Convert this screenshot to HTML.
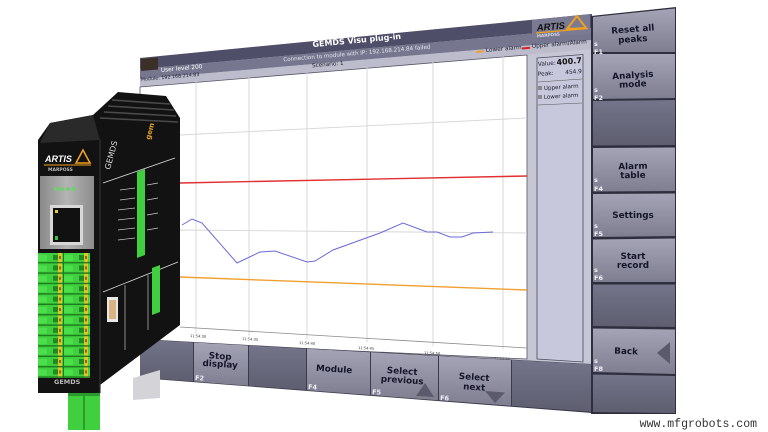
<!DOCTYPE html>
<html><head><meta charset="utf-8"><style>
html,body{margin:0;padding:0;background:#fff;}
svg{display:block;font-family:"DejaVu Sans","Liberation Sans",sans-serif;}
.bl{font-weight:bold;fill:#15152a;font-size:8.8px;text-anchor:middle;}
.fk{font-weight:bold;fill:#f0f0f8;font-size:6.5px;}
</style></head><body>
<svg width="768" height="432" viewBox="0 0 768 432" xmlns="http://www.w3.org/2000/svg">
<defs>
<linearGradient id="btn" x1="0" y1="0" x2="0" y2="1"><stop offset="0" stop-color="#a4a4b6"/><stop offset="1" stop-color="#7e7e90"/></linearGradient>
<linearGradient id="dk" x1="0" y1="0" x2="0" y2="1"><stop offset="0" stop-color="#74748a"/><stop offset="1" stop-color="#5e5e70"/></linearGradient>
<linearGradient id="gmod" x1="0" y1="0" x2="1" y2="0"><stop offset="0" stop-color="#8a8a8a"/><stop offset="0.5" stop-color="#b4b4b4"/><stop offset="1" stop-color="#8c8c8c"/></linearGradient>
<pattern id="term" x="0" y="253" width="26" height="10.4" patternUnits="userSpaceOnUse">
<rect width="26" height="10.4" fill="#3fcf3f"/>
<rect x="1" y="2" width="5" height="5" fill="#1f8a1f"/>
<rect x="6" y="0" width="4" height="10.4" fill="#e0c428"/>
<rect x="7" y="3" width="2" height="3" fill="#8a6a10"/>
<rect x="11" y="2" width="10" height="6" fill="#4be04b"/>
<rect x="0" y="9" width="26" height="1.4" fill="#1d7a1d"/>
</pattern>
</defs>

<polygon points="140,58 592,14 592,364 140,339" fill="#c6c6d4"/>
<polygon points="140,58 592,14 592,28 140,69" fill="#4e4e68"/>
<polygon points="140,69 592,28 592,40 140,79" fill="#76768e"/>
<polygon points="140,79 592,40 592,49 140,88" fill="#bcbccc"/>
<polygon points="532,20 590,14 590,34 532,38" fill="#7a7a92"/>
<text x="537" y="31" font-family="Liberation Sans,sans-serif" font-weight="bold" font-style="italic" font-size="9.5" fill="#111" transform="rotate(-5 537 31)">ARTIS</text>
<polygon points="567,29 577,16 586,28" fill="none" stroke="#f0a020" stroke-width="2"/>
<line x1="536" y1="33" x2="588" y2="28.5" stroke="#f0a020" stroke-width="1.3"/>
<text x="537" y="37.5" font-size="4.2" font-weight="bold" fill="#d8d8e8" transform="rotate(-5 537 37.5)">MARPOSS</text>
<text x="357" y="43" font-size="8" font-weight="bold" fill="#fff" text-anchor="middle" transform="rotate(-5.4 357 43)">GEMDS Visu plug-in</text>
<text x="357" y="55" font-size="5.6" fill="#e4e4f0" text-anchor="middle" transform="rotate(-5 357 55)">Connection to module with IP: 192.168.214.84 failed</text>
<text x="328" y="66" font-size="5.6" fill="#202030" text-anchor="middle" transform="rotate(-4.8 328 66)">Scenario: 1</text>
<polygon points="141,59 158,57.4 158,69.5 141,71" fill="#3a3028"/>
<text x="161" y="72" font-size="5.8" fill="#fff" transform="rotate(-5.2 161 72)">User level  200</text>
<text x="141" y="81" font-size="4.8" fill="#202030" transform="rotate(-5 141 81)">Module: 192.168.214.83</text>
<line x1="476" y1="52" x2="484" y2="51.3" stroke="#f0a030" stroke-width="2"/>
<text x="486" y="52" font-size="5.8" fill="#1a1a2a" transform="rotate(-4.9 486 52)">Lower alarm</text>
<line x1="522" y1="48.5" x2="530" y2="47.8" stroke="#e02020" stroke-width="2"/>
<text x="532" y="48" font-size="5.8" fill="#1a1a2a" transform="rotate(-4.9 532 48)">Upper alarm/Alarm</text>

<polygon points="140,87 527,55 527,359 140,341" fill="#ffffff"/>
<polygon points="140,87 527,55 527,359 140,341" fill="none" stroke="#555566" stroke-width="0.8"/>
<g stroke="#d6d6d6" stroke-width="0.9">
<line x1="196" y1="81.4" x2="196" y2="334"/>
<line x1="249" y1="77.1" x2="249" y2="336.5"/>
<line x1="307" y1="72.3" x2="307" y2="339.5"/>
<line x1="367" y1="67.4" x2="367" y2="342.5"/>
<line x1="433" y1="62" x2="433" y2="346"/>
<line x1="503" y1="56.2" x2="503" y2="349.5"/>
<line x1="180" y1="135" x2="527" y2="118"/>
<line x1="180" y1="230" x2="527" y2="233"/>
</g>
<line x1="180" y1="327" x2="527" y2="348" stroke="#8a8a8a" stroke-width="0.8"/>
<line x1="180" y1="183" x2="527" y2="176" stroke="#e03030" stroke-width="1.4"/>
<line x1="180" y1="277" x2="527" y2="290" stroke="#f0a030" stroke-width="1.4"/>
<polyline points="182,225 192,219 202,223 237,263 260,252 275,251 307,262 315,261 333,250 380,233 403,223 427,232 437,232 450,237 462,237 473,233 493,232" fill="none" stroke="#6a6ad8" stroke-width="1"/>
<g font-size="3.6" fill="#333">
<text x="190" y="337" transform="rotate(3 190 337)">11:54:30</text>
<text x="242" y="340" transform="rotate(3 242 340)">11:54:35</text>
<text x="299" y="344" transform="rotate(3 299 344)">11:54:40</text>
<text x="358" y="349" transform="rotate(3 358 349)">11:54:45</text>
<text x="424" y="354" transform="rotate(3 424 354)">11:54:50</text>
<text x="494" y="360" transform="rotate(3 494 360)">11:54:55</text>
</g>
<polygon points="537,58 583,54.5 583,362 537,359" fill="#c8c8dc" stroke="#4a4a5a" stroke-width="0.8"/>
<text x="538" y="66" font-size="5.8" fill="#1a1a2a" transform="rotate(-4.4 538 66)">Value:</text>
<text x="582" y="63" font-size="8" font-weight="bold" fill="#111" text-anchor="end" transform="rotate(-4.4 582 63)">400.7</text>
<text x="538" y="76" font-size="5.8" fill="#1a1a2a" transform="rotate(-4.2 538 76)">Peak:</text>
<text x="582" y="73" font-size="5.8" fill="#1a1a2a" text-anchor="end" transform="rotate(-4.2 582 73)">454.9</text>
<line x1="538" y1="82" x2="582" y2="79" stroke="#555" stroke-width="0.6"/>
<rect x="538" y="86" width="4" height="4" fill="#8a8a8a"/>
<text x="544" y="90" font-size="5.6" fill="#1a1a2a" transform="rotate(-4 544 90)">Upper alarm</text>
<rect x="538" y="95" width="4" height="4" fill="#8a8a8a"/>
<text x="544" y="99" font-size="5.6" fill="#1a1a2a" transform="rotate(-3.8 544 99)">Lower alarm</text>
<line x1="538" y1="105" x2="582" y2="103" stroke="#555" stroke-width="0.6"/>

<polygon points="140,339 592,364 592,413 140,378" fill="#3a3a4a"/>
<polygon points="140,339.5 193,342.4 193,381.5 140,377.5" fill="url(#dk)"/>
<polygon points="194,342.5 248,345.5 248,385.7 194,381.5" fill="url(#btn)"/>
<polygon points="249,345.5 306,348.7 306,390 249,385.8" fill="url(#dk)"/>
<polygon points="307,348.7 370,352.2 370,395 307,390.2" fill="url(#btn)"/>
<polygon points="371,352.3 438,356 438,400.2 371,395.1" fill="url(#btn)"/>
<polygon points="439,356 511,360 511,405.8 439,400.3" fill="url(#btn)"/>
<polygon points="512,360 591,364.3 591,411.7 512,405.9" fill="url(#dk)"/>
<text x="220" y="359" class="bl" font-size="6.2" transform="rotate(3.5 220 359)">Stop</text>
<text x="220" y="367" class="bl" font-size="6.2" transform="rotate(3.5 220 367)">display</text>
<text x="195" y="380" class="fk" font-size="5.6" transform="rotate(3.5 195 380)">F2</text>
<text x="334" y="372" class="bl" font-size="6.4" transform="rotate(3.6 334 372)">Module</text>
<text x="308" y="389" class="fk" font-size="5.6" transform="rotate(3.6 308 389)">F4</text>
<text x="402" y="374" class="bl" font-size="6.6" transform="rotate(3.8 402 374)">Select</text>
<text x="402" y="383" class="bl" font-size="6.6" transform="rotate(3.8 402 383)">previous</text>
<text x="372" y="394" class="fk" font-size="5.6" transform="rotate(3.8 372 394)">F5</text>
<polygon points="416,396 425,383 434,397" fill="#5a5a6c"/>
<text x="474" y="380" class="bl" font-size="6.6" transform="rotate(4 474 380)">Select</text>
<text x="474" y="390" class="bl" font-size="6.6" transform="rotate(4 474 390)">next</text>
<text x="440" y="400" class="fk" font-size="5.6" transform="rotate(4 440 400)">F6</text>
<polygon points="485,391 505,392.5 495,403" fill="#5a5a6c"/>

<polygon points="591,16 676,7 676,414 591,414" fill="#2e2e3e"/>
<polygon points="593,17 675,8.5 675,52 593,52" fill="url(#btn)"/>
<polygon points="593,54 675,54 675,98 593,99" fill="url(#btn)"/>
<polygon points="593,101 675,100 675,145 593,145.5" fill="url(#dk)"/>
<polygon points="593,148 675,147.5 675,191 593,191.5" fill="url(#btn)"/>
<polygon points="593,194 675,193.5 675,236 593,237" fill="url(#btn)"/>
<polygon points="593,239.5 675,238.5 675,282 593,282" fill="url(#btn)"/>
<polygon points="593,284.5 675,284.5 675,327 593,326" fill="url(#dk)"/>
<polygon points="593,328.5 675,329.5 675,374 593,372" fill="url(#btn)"/>
<polygon points="593,374.5 675,376 675,413 593,412" fill="url(#dk)"/>
<text x="633" y="32" class="bl" transform="rotate(-4.5 633 32)">Reset all</text>
<text x="633" y="42" class="bl" transform="rotate(-4 633 42)">peaks</text>
<text x="594" y="46" class="fk">s</text><text x="594" y="54" class="fk">F1</text>
<text x="633" y="78" class="bl" transform="rotate(-3.5 633 78)">Analysis</text>
<text x="633" y="87" class="bl" transform="rotate(-3.3 633 87)">mode</text>
<text x="594" y="92" class="fk">s</text><text x="594" y="100" class="fk">F2</text>
<text x="633" y="169" class="bl" transform="rotate(-1.5 633 169)">Alarm</text>
<text x="633" y="178" class="bl" transform="rotate(-1.4 633 178)">table</text>
<text x="594" y="182" class="fk">s</text><text x="594" y="191" class="fk">F4</text>
<text x="633" y="218" class="bl">Settings</text>
<text x="594" y="228" class="fk">s</text><text x="594" y="236" class="fk">F5</text>
<text x="633" y="259" class="bl">Start</text>
<text x="633" y="268" class="bl">record</text>
<text x="594" y="272" class="fk">s</text><text x="594" y="280" class="fk">F6</text>
<text x="626" y="354" class="bl" transform="rotate(2 626 354)">Back</text>
<polygon points="670,342 657,353 670,364" fill="#5a5a6c"/>
<text x="594" y="363" class="fk">s</text><text x="594" y="371" class="fk">F8</text>

<polygon points="133,378 160,370 160,398 133,400" fill="#d4d4d8"/>
<polygon points="38,140 50,123 93,115 118,92 166,96 180,118 180,325 100,385 100,393 38,393" fill="#121212"/>
<g stroke="#4a4a4a" stroke-width="1.6">
<line x1="112" y1="100" x2="170" y2="104"/>
<line x1="108" y1="106" x2="174" y2="110"/>
<line x1="104" y1="112" x2="176" y2="116"/>
<line x1="100" y1="118" x2="178" y2="122"/>
</g>
<polygon points="50,123 93,115 100,140 40,143" fill="#2a2a2a"/>
<line x1="100" y1="140" x2="100" y2="393" stroke="#333" stroke-width="1.2"/>
<text x="45" y="162" font-family="Liberation Sans,sans-serif" font-weight="bold" font-style="italic" font-size="9" fill="#fff">ARTIS</text>
<polygon points="76,163 83,150 90,163" fill="none" stroke="#f0a020" stroke-width="1.6"/>
<line x1="44" y1="165" x2="91" y2="165" stroke="#f0a020" stroke-width="1"/>
<text x="48" y="171" font-size="4.5" font-weight="bold" fill="#bbb">MARPOSS</text>
<rect x="40" y="176" width="54" height="73" fill="url(#gmod)"/>
<circle cx="56" cy="189" r="2" fill="#6ad46a"/><circle cx="62" cy="189" r="2" fill="#6ad46a"/>
<circle cx="68" cy="189" r="2" fill="#6ad46a"/><circle cx="74" cy="189" r="2" fill="#6ad46a"/>
<rect x="50" y="205" width="33" height="40" fill="#d8d8d8"/>
<rect x="53" y="208" width="27" height="34" fill="#111"/>
<rect x="55" y="210" width="3" height="3" fill="#e8d020"/>
<rect x="55" y="236" width="3" height="4" fill="#40c040"/>
<rect x="38" y="253" width="52" height="125" fill="url(#term)"/>
<line x1="63.5" y1="253" x2="63.5" y2="378" stroke="#1d7a1d" stroke-width="1"/>
<text x="54" y="384" font-size="6.5" font-weight="bold" fill="#bbb">GEMDS</text>
<rect x="68" y="393" width="32" height="37" fill="#3fcf3f"/>
<line x1="84" y1="393" x2="84" y2="430" stroke="#1d7a1d" stroke-width="1.2"/>
<rect x="68" y="393" width="32" height="3" fill="#2a9a2a"/>
<text x="110" y="170" font-size="8" fill="#ddd" transform="rotate(-75 110 170)">GEMDS</text>
<text x="150" y="140" font-size="7" font-weight="bold" fill="#e0a030" transform="rotate(-75 150 140)">gem</text>
<line x1="103" y1="183" x2="175" y2="158" stroke="#ddd" stroke-width="0.8"/>
<polygon points="137,172 145,169 145,255 137,258" fill="#3fcf3f"/>
<g stroke="#ccc" stroke-width="0.7">
<line x1="120" y1="190" x2="135" y2="188"/><line x1="120" y1="200" x2="135" y2="198"/>
<line x1="118" y1="210" x2="135" y2="208"/><line x1="118" y1="220" x2="135" y2="218"/>
<line x1="118" y1="230" x2="135" y2="228"/><line x1="118" y1="240" x2="135" y2="238"/>
<line x1="147" y1="185" x2="158" y2="183"/><line x1="147" y1="200" x2="158" y2="198"/>
<line x1="147" y1="215" x2="158" y2="213"/><line x1="147" y1="230" x2="158" y2="228"/>
</g>
<line x1="103" y1="292" x2="178" y2="262" stroke="#ddd" stroke-width="0.8"/>
<line x1="125" y1="285" x2="125" y2="350" stroke="#ddd" stroke-width="0.6"/>
<line x1="148" y1="275" x2="148" y2="330" stroke="#ddd" stroke-width="0.6"/>
<polygon points="152,268 160,265 160,312 152,315" fill="#3fcf3f"/>
<rect x="107" y="297" width="11" height="25" fill="#e8e8e8"/>
<rect x="109" y="300" width="7" height="19" fill="#d09040" opacity="0.6"/>

<text x="757" y="427" font-family="Liberation Mono,monospace" font-size="11.5" fill="#333" text-anchor="end">www.mfgrobots.com</text>
</svg>
</body></html>
